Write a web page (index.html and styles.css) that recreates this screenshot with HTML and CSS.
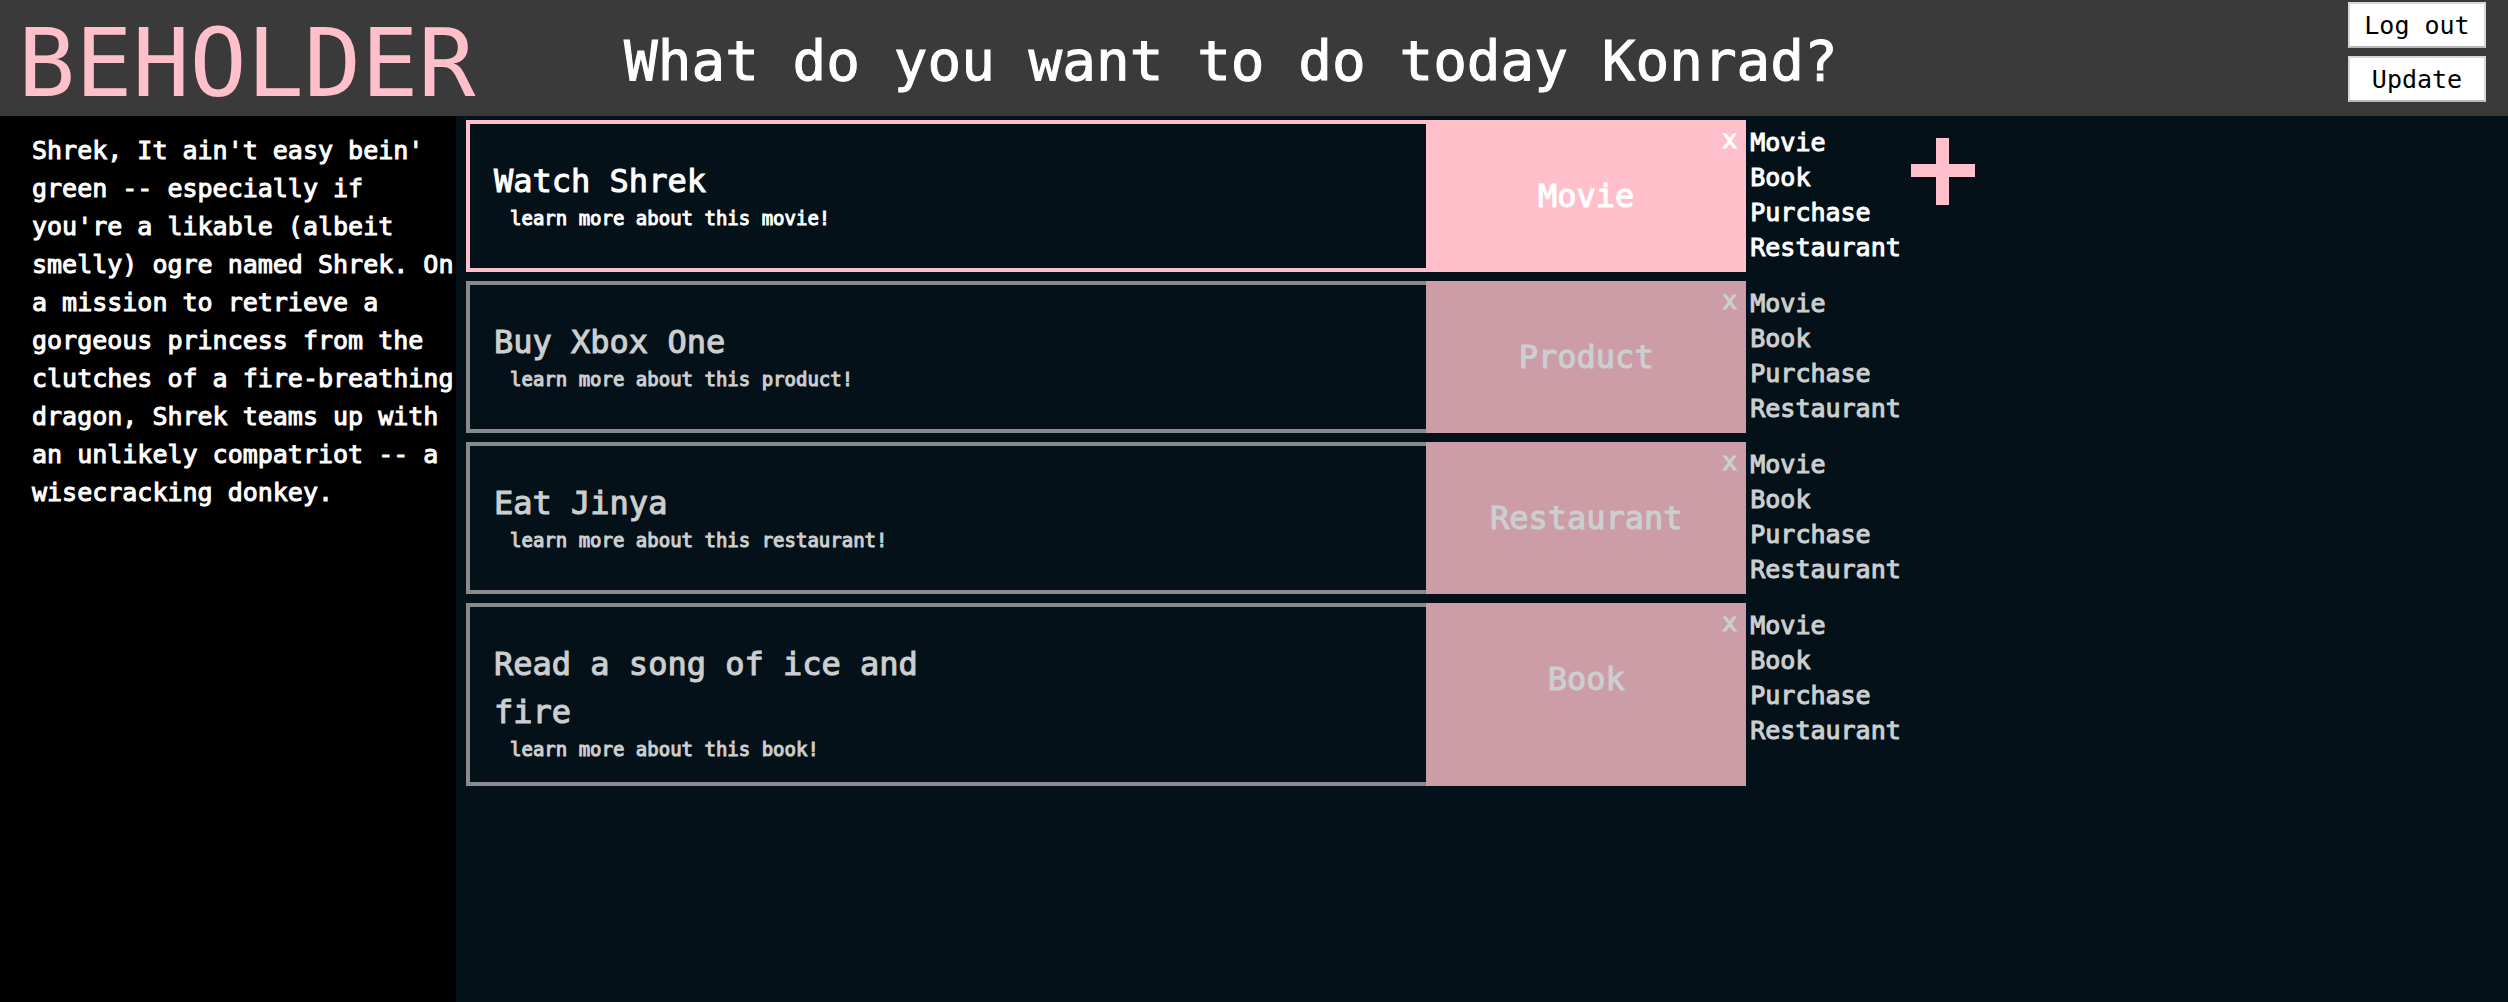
FILE: index.html
```html
<!DOCTYPE html>
<html lang="en">
<head>
<meta charset="utf-8">
<meta name="viewport" content="width=device-width, initial-scale=1">
<title>Beholder</title>
<link rel="stylesheet" href="styles.css">
</head>
<body>
<header class="header">
  <div class="logo">BEHOLDER</div>
  <h1 class="greeting">What do you want to do today Konrad?</h1>
  <div class="account">
    <button class="account-button" type="button">Log out</button>
    <button class="account-button" type="button">Update</button>
  </div>
</header>
<div class="layout">
  <aside class="details">
    <p class="details-text">Shrek, It ain't easy bein' green -- especially if you're a likable (albeit smelly) ogre named Shrek. On a mission to retrieve a gorgeous princess from the clutches of a fire-breathing dragon, Shrek teams up with an unlikely compatriot -- a wisecracking donkey.</p>
  </aside>
  <main class="tasks">
    <article class="task task-active">
      <div class="task-body">
        <h2 class="task-title">Watch Shrek</h2>
        <a class="task-more" href="#movie">learn more about this movie!</a>
      </div>
      <div class="task-tag">
        <span class="tag-name">Movie</span>
        <button class="task-remove" type="button" aria-label="Remove Watch Shrek">x</button>
      </div>
      <div class="task-side">
        <ul class="kinds">
          <li><button class="kind" type="button">Movie</button></li>
          <li><button class="kind" type="button">Book</button></li>
          <li><button class="kind" type="button">Purchase</button></li>
          <li><button class="kind" type="button">Restaurant</button></li>
        </ul>
        <button class="add" type="button" aria-label="Add task">
          <svg class="add-icon" viewBox="0 0 64 67" aria-hidden="true"><path d="M25 0h13v26h26v13H38v28H25V39H0V26h25z"/></svg>
        </button>
      </div>
    </article>
    <article class="task">
      <div class="task-body">
        <h2 class="task-title">Buy Xbox One</h2>
        <a class="task-more" href="#product">learn more about this product!</a>
      </div>
      <div class="task-tag">
        <span class="tag-name">Product</span>
        <button class="task-remove" type="button" aria-label="Remove Buy Xbox One">x</button>
      </div>
      <div class="task-side">
        <ul class="kinds">
          <li><button class="kind" type="button">Movie</button></li>
          <li><button class="kind" type="button">Book</button></li>
          <li><button class="kind" type="button">Purchase</button></li>
          <li><button class="kind" type="button">Restaurant</button></li>
        </ul>
      </div>
    </article>
    <article class="task">
      <div class="task-body">
        <h2 class="task-title">Eat Jinya</h2>
        <a class="task-more" href="#restaurant">learn more about this restaurant!</a>
      </div>
      <div class="task-tag">
        <span class="tag-name">Restaurant</span>
        <button class="task-remove" type="button" aria-label="Remove Eat Jinya">x</button>
      </div>
      <div class="task-side">
        <ul class="kinds">
          <li><button class="kind" type="button">Movie</button></li>
          <li><button class="kind" type="button">Book</button></li>
          <li><button class="kind" type="button">Purchase</button></li>
          <li><button class="kind" type="button">Restaurant</button></li>
        </ul>
      </div>
    </article>
    <article class="task">
      <div class="task-body">
        <h2 class="task-title">Read a song of ice and fire</h2>
        <a class="task-more" href="#book">learn more about this book!</a>
      </div>
      <div class="task-tag">
        <span class="tag-name">Book</span>
        <button class="task-remove" type="button" aria-label="Remove Read a song of ice and fire">x</button>
      </div>
      <div class="task-side">
        <ul class="kinds">
          <li><button class="kind" type="button">Movie</button></li>
          <li><button class="kind" type="button">Book</button></li>
          <li><button class="kind" type="button">Purchase</button></li>
          <li><button class="kind" type="button">Restaurant</button></li>
        </ul>
      </div>
    </article>
  </main>
</div>
</body>
</html>
```
FILE: styles.css
```css
* {
  box-sizing: border-box;
}

body {
  display: flex;
  flex-direction: column;
  min-height: 100vh;
  margin: 0;
  background: #041118;
  color: #fff;
  font-family: "DejaVu Sans Mono", "Liberation Mono", monospace;
  font-size: 25px;
}

button {
  padding: 0;
  border: 0;
  background: none;
  color: inherit;
  font: inherit;
  cursor: pointer;
}

.header {
  display: grid;
  grid-template-columns: 606px 1fr auto;
  padding: 0 22px 0 18px;
  background: #3a3a3a;
}

.logo {
  padding-top: 10px;
  color: pink;
  font-size: 95px;
  line-height: 106px;
}

.greeting {
  margin: 0;
  padding-top: 8px;
  font-size: 56px;
  font-weight: 400;
  line-height: 106px;
  -webkit-text-stroke: 1px currentColor;
}

.account {
  display: flex;
  flex-direction: column;
  gap: 8px;
  padding-top: 2px;
}

.account-button {
  width: 138px;
  height: 46px;
  border: 2px solid #d8d8d8;
  border-bottom-color: #b8b8b8;
  background: #fff;
  color: #000;
}

.layout {
  display: flex;
  flex: 1;
  -webkit-text-stroke: 1px currentColor;
}

.details {
  flex: 0 0 456px;
  padding: 16px 0 16px 32px;
  overflow: hidden;
  background: #000;
}

.details-text {
  margin: 0;
  line-height: 38px;
}

.tasks {
  display: flex;
  flex: 1;
  flex-direction: column;
  gap: 9px;
  min-width: 0;
  padding: 4px 0 4px 10px;
}

.task {
  display: grid;
  grid-template-columns: 3fr 1fr 2.38fr;
  min-height: 152px;
  opacity: 0.8;
}

.task-active {
  opacity: 1;
}

.task-body {
  padding: 33px 0 20px 24px;
  border: 4px solid #a9a9a9;
  border-right: 0;
}

.task-active .task-body {
  border-color: pink;
}

.task-title {
  max-width: 50%;
  margin: 0;
  font-size: 32px;
  font-weight: 400;
  line-height: 48px;
}

.task-more {
  display: block;
  padding-left: 16px;
  color: inherit;
  font-size: 19px;
  line-height: 26px;
  text-decoration: none;
}

.task-tag {
  position: relative;
  padding-top: 52px;
  background: pink;
  text-align: center;
}

.tag-name {
  font-size: 32px;
  line-height: 48px;
}

.task-remove {
  position: absolute;
  top: 0;
  right: 9px;
  line-height: 40px;
}

.task-side {
  display: flex;
  align-items: flex-start;
  gap: 10px;
}

.kinds {
  margin: 0;
  padding: 5px 0 0 4px;
  list-style: none;
}

.kind {
  display: block;
  line-height: 35px;
}

.add {
  padding-top: 18px;
}

.add-icon {
  display: block;
  width: 64px;
  height: 67px;
  fill: pink;
  stroke: none;
}
```
